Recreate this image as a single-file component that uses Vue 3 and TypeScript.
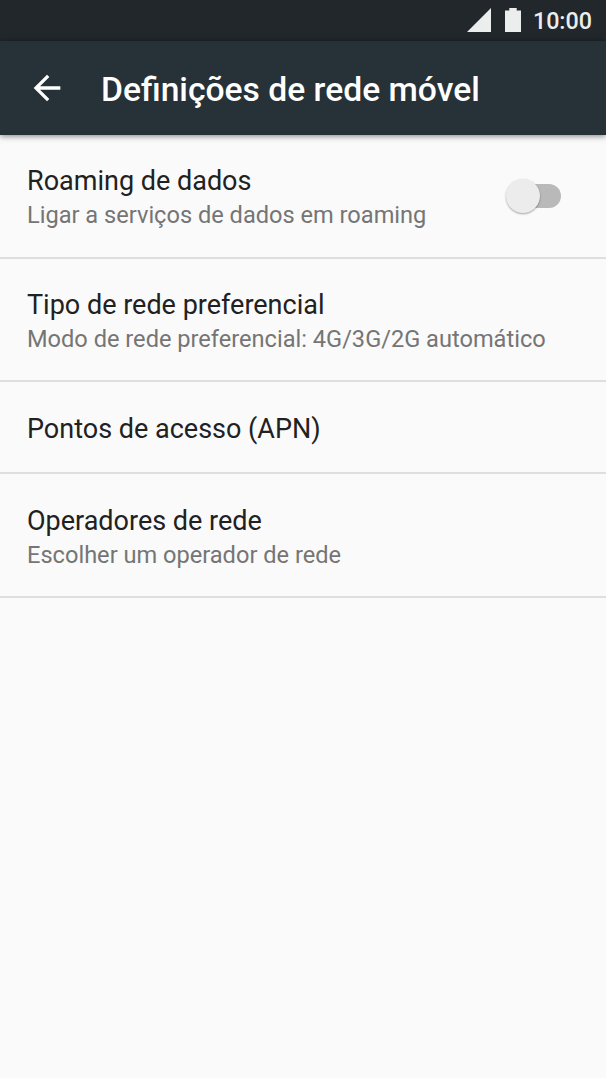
<template>
  <div class="screen">
    <!-- Barra de estado -->
    <header class="status-bar">
      <svg class="signal-icon" viewBox="0 0 24 24" aria-hidden="true">
        <path d="M0 24H24V0z" />
      </svg>
      <svg class="battery-icon" viewBox="0 0 16 24" aria-hidden="true">
        <path d="M4.3 0h7.4v2.5H16V24H0V2.5h4.3z" />
      </svg>
      <span class="clock">{{ time }}</span>
    </header>

    <!-- Barra de título -->
    <div class="app-bar">
      <button class="back-button" type="button" aria-label="Voltar">
        <svg viewBox="0 0 24 24" aria-hidden="true">
          <path d="M20 11H7.83l5.59-5.59L12 4l-8 8 8 8 1.41-1.41L7.83 13H20v-2z" />
        </svg>
      </button>
      <h1>Definições de rede móvel</h1>
    </div>

    <!-- Lista de definições -->
    <main class="settings-list">
      <div
        v-for="item in items"
        :key="item.title"
        class="setting-item"
        :class="{ single: !item.summary }"
        @click="toggle(item)"
      >
        <div class="setting-text">
          <div class="setting-title">{{ item.title }}</div>
          <div v-if="item.summary" class="setting-summary">{{ item.summary }}</div>
        </div>
        <div v-if="item.hasSwitch" class="switch" :class="{ on: roaming }">
          <span class="thumb"></span>
        </div>
      </div>
    </main>
  </div>
</template>

<script setup lang="ts">
import { ref } from 'vue'

interface SettingItem {
  title: string
  summary?: string
  hasSwitch?: boolean
}

const time = ref('10:00')
const roaming = ref(false)

const items: SettingItem[] = [
  {
    title: 'Roaming de dados',
    summary: 'Ligar a serviços de dados em roaming',
    hasSwitch: true
  },
  {
    title: 'Tipo de rede preferencial',
    summary: 'Modo de rede preferencial: 4G/3G/2G automático'
  },
  { title: 'Pontos de acesso (APN)' },
  {
    title: 'Operadores de rede',
    summary: 'Escolher um operador de rede'
  }
]

const toggle = (item: SettingItem) => {
  if (item.hasSwitch) {
    roaming.value = !roaming.value
  }
}
</script>

<style>
body {
  margin: 0;
  background: #fafafa;
}
</style>

<style scoped>
.screen {
  display: flex;
  flex-direction: column;
  min-height: 100vh;
  background: #fafafa;
  font-family: Roboto, 'Noto Sans', sans-serif;
}

.status-bar {
  display: flex;
  align-items: center;
  justify-content: flex-end;
  box-sizing: border-box;
  height: 41px;
  padding-right: 14px;
  background: #21272b;
  color: #eceded;
}

.signal-icon {
  width: 24px;
  height: 24px;
  margin: 0 14px 1px 0;
  fill: #eceded;
}

.battery-icon {
  width: 16px;
  height: 24px;
  margin: 0 12px 1px 0;
  fill: #eceded;
}

.clock {
  padding-top: 2px;
  font-size: 23.3px;
  font-weight: 500;
  line-height: 39px;
}

.app-bar {
  display: flex;
  align-items: center;
  box-sizing: border-box;
  height: 94px;
  padding-left: 27px;
  background: #263238;
  box-shadow: 0 1px 6px rgba(0, 0, 0, 0.5);
}

.back-button {
  width: 40px;
  height: 40px;
  margin: 0 34px 1px 0;
  padding: 0;
  border: none;
  background: none;
  cursor: pointer;
}

.back-button svg {
  display: block;
  width: 40px;
  height: 40px;
  fill: #fff;
}

.app-bar h1 {
  margin: 0;
  padding-top: 4px;
  font-size: 33.65px;
  font-weight: 500;
  line-height: 40px;
  color: #fff;
  white-space: nowrap;
}

.setting-item {
  display: flex;
  align-items: center;
  justify-content: space-between;
  box-sizing: border-box;
  height: 124px;
  padding: 0 43px 0 27px;
  border-bottom: 2px solid #dedede;
}

.setting-item:nth-child(2) {
  height: 123px;
}

.setting-item.single {
  height: 92px;
}

.setting-text {
  padding-top: 2px;
  white-space: nowrap;
}

.setting-item:nth-child(2) .setting-text {
  padding-top: 3px;
}

.setting-item:nth-child(n + 3) .setting-text {
  padding-top: 4px;
}

.setting-title {
  font-size: 27px;
  line-height: 36px;
  color: #212121;
}

.setting-summary {
  font-size: 23.6px;
  line-height: 32px;
  color: #757575;
}

.switch {
  position: relative;
  width: 52px;
  height: 24px;
  margin-right: 2px;
  border-radius: 12px;
  background: #b9b9b9;
}

.thumb {
  position: absolute;
  top: -5px;
  left: -3px;
  width: 34px;
  height: 34px;
  border-radius: 50%;
  background: #ececec;
  box-shadow: 0 1px 2px rgba(0, 0, 0, 0.35);
}

.switch.on .thumb {
  left: 21px;
  background: #009688;
}
</style>
